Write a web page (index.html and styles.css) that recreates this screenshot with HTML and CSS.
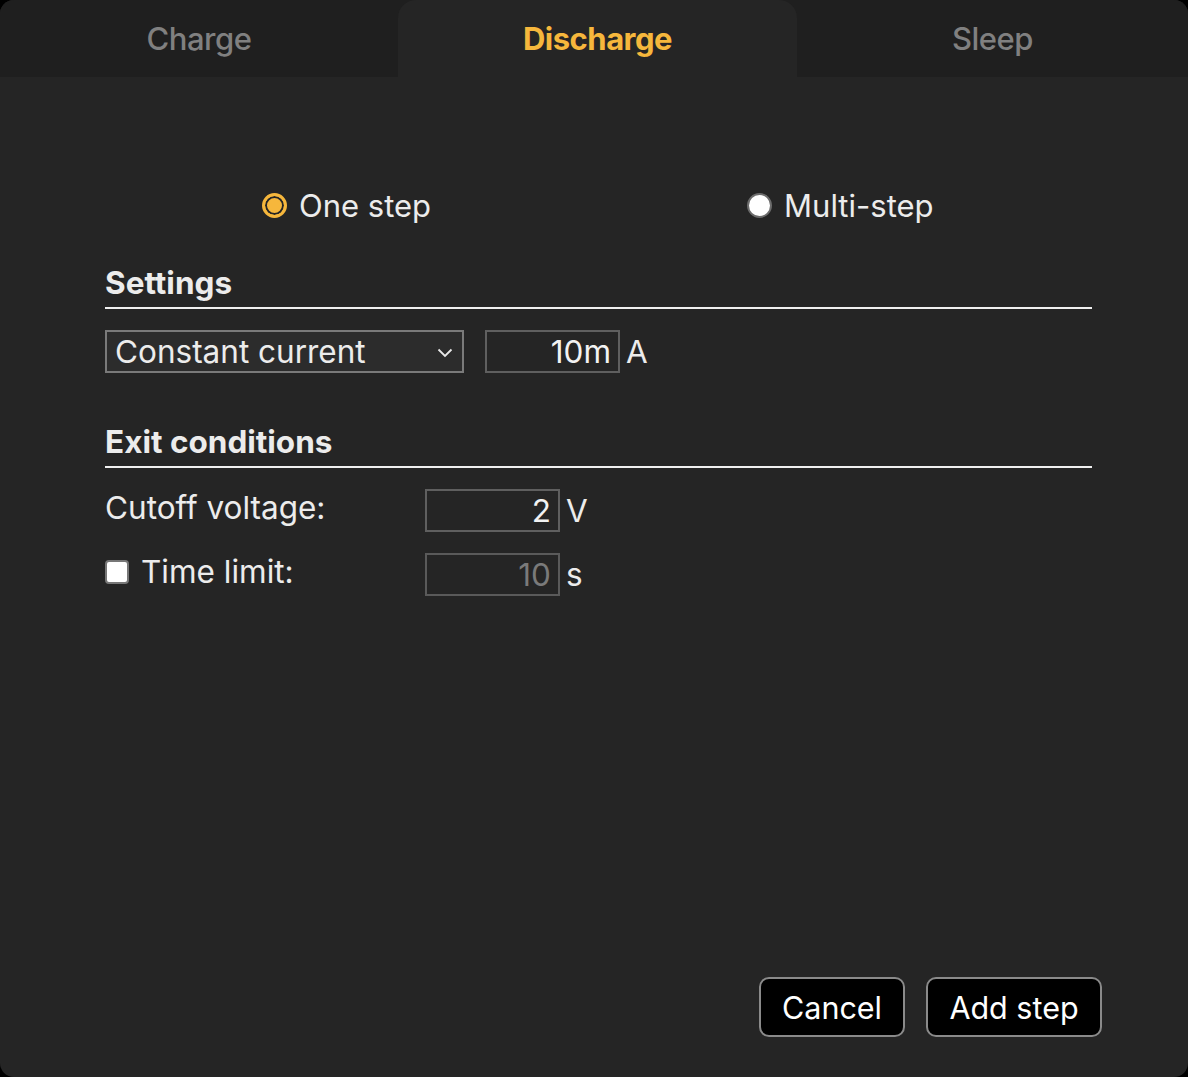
FILE: index.html
```html
<!DOCTYPE html>
<html>
<head>
<meta charset="utf-8">
<link rel="stylesheet" href="styles.css">
</head>
<body>
<div class="window">
  <div class="tabs">
    <div class="tab">Charge</div>
    <div class="tab active">Discharge</div>
    <div class="tab">Sleep</div>
  </div>
  <div class="content">
    <div class="modes">
      <label class="radio first"><span class="dot on"></span>One step</label>
      <label class="radio second"><span class="dot"></span>Multi-step</label>
    </div>
    <h2 class="heading">Settings</h2>
    <div class="row settings-row">
      <div class="select"><span>Constant current</span>
        <svg class="chev" width="16" height="10" viewBox="0 0 16 10"><path d="M1.5 1.5 L8 8 L14.5 1.5" fill="none" stroke="#e8e8e8" stroke-width="1.8"/></svg>
      </div>
      <div class="num">10m</div><span class="unit">A</span>
    </div>
    <h2 class="heading exit">Exit conditions</h2>
    <div class="cond c1">
      <div class="cond-label">Cutoff voltage:</div>
      <div class="num">2</div><span class="unit">V</span>
    </div>
    <div class="cond c2">
      <div class="cond-label"><span class="check"></span>Time limit:</div>
      <div class="num disabled">10</div><span class="unit">s</span>
    </div>
  </div>
  <div class="actions">
    <button class="btn cancel">Cancel</button>
    <button class="btn add">Add step</button>
  </div>
</div>
</body>
</html>
```
FILE: styles.css
```css
html, body {
  margin: 0;
  padding: 0;
  background: #000;
}
body {
  width: 1188px;
  height: 1077px;
  font-family: Inter, "Noto Sans", sans-serif;
  color: #ececec;
}
.window {
  width: 1188px;
  height: 1077px;
  background: #252525;
  border-radius: 14px;
  overflow: hidden;
  display: flex;
  flex-direction: column;
}
.tabs {
  display: grid;
  grid-template-columns: 398px 399px 391px;
  height: 77px;
  background: #1f1f1f;
}
.tab {
  display: flex;
  justify-content: center;
  align-items: center;
  font-family: Inter, sans-serif;
  font-size: 31px;
  font-weight: 500;
  color: #808080;
  letter-spacing: -0.5px;
}
.tab.active {
  background: #252525;
  color: #f6b73c;
  font-weight: 700;
  border-radius: 18px 18px 0 0;
}
.content {
  flex: 1;
  padding: 0 96px 0 105px;
}
.modes {
  display: flex;
  margin-top: 110px;
  height: 36px;
  align-items: center;
}
.radio {
  display: flex;
  align-items: center;
  font-size: 31px;
  color: #ececec;
}
.radio.first { margin-left: 157px; }
.radio.second { margin-left: 316px; }
.dot {
  width: 25px;
  height: 25px;
  border-radius: 50%;
  background: #fff;
  border: 2px solid #6c6c6c;
  margin-right: 12px;
  box-sizing: border-box;
}
.dot.on {
  background: #f6b73c;
  border: 3px solid #f6b73c;
  box-shadow: inset 0 0 0 2px #252525;
  margin-right: 12px;
}
.heading {
  margin: 43px 0 0 0;
  font-size: 31.5px;
  font-weight: 700;
  line-height: 34px;
  padding-bottom: 7px;
  border-bottom: 2px solid #f0f0f0;
  letter-spacing: 0;
}
.heading.exit {
  margin-top: 52px;
}
.settings-row {
  display: flex;
  align-items: center;
  margin-top: 21px;
}
.select {
  width: 359px;
  height: 43px;
  box-sizing: border-box;
  border: 2px solid #7a7a7a;
  background: #2c2c2c;
  display: flex;
  align-items: center;
  justify-content: space-between;
  padding: 0 9px 0 8px;
  font-size: 31.5px;
  color: #ececec;
}
.chev { margin-top: 2px; }
.num {
  width: 135px;
  height: 43px;
  box-sizing: border-box;
  border: 2px solid #5f5f5f;
  display: flex;
  align-items: center;
  justify-content: flex-end;
  padding-right: 7px;
  font-size: 31.5px;
  color: #f2f2f2;
}
.settings-row .num { margin-left: 21px; }
.num.disabled { color: #7a7a7a; border-color: #5a5a5a; }
.unit {
  font-size: 31.5px;
  margin-left: 6px;
  color: #ececec;
}
.cond {
  display: flex;
  align-items: center;
}
.cond.c1 { margin-top: 21px; }
.cond.c2 { margin-top: 21px; }
.cond-label {
  width: 320px;
  font-size: 31.5px;
  display: flex;
  align-items: center;
  margin-top: -6px;
}
.check {
  width: 24px;
  height: 24px;
  box-sizing: border-box;
  background: #fff;
  border: 2px solid #777;
  border-radius: 4px;
  margin-right: 12px;
}
.actions {
  display: flex;
  justify-content: flex-end;
  gap: 21px;
  padding: 0 86px 40px 0;
}
.btn {
  height: 60px;
  box-sizing: border-box;
  background: #000;
  color: #fff;
  border: 2px solid #8a8a8a;
  border-radius: 10px;
  font-family: Inter, sans-serif;
  font-size: 30.5px;
  padding: 0;
}
.cancel { width: 146px; }
.add { width: 176px; }
```
